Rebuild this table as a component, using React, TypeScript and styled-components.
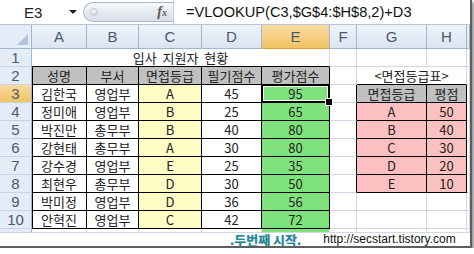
import React from "react";
import styled, { createGlobalStyle, css } from "styled-components";

const GRID = "#d0d7e5";
const HEAD_LINE = "#9eb6ce";
const KR = `"Noto Sans CJK KR", "Noto Sans", sans-serif`;
const LATIN = `"Liberation Sans", Arial, sans-serif`;

const GRAY = "#c0c0c0";
const YELLOW = "#fdfcc4";
const GREEN = "#80e27c";
const PINK = "#fbc1c1";

const GlobalStyle = createGlobalStyle`
  * { box-sizing: border-box; }
  body { margin: 0; background: #fff; }
`;

const Window = styled.div`
  width: 472px;
  height: 248px;
  display: flex;
  flex-direction: column;
  background: #fff;
  border-right: 2px solid #5e5e5e;
  border-bottom: 2px solid #5e5e5e;
  box-shadow: 2px 2px 3px rgba(0, 0, 0, 0.45);
  overflow: hidden;
`;

const FormulaBar = styled.div`
  height: 25px;
  display: flex;
  align-items: center;
  border-bottom: 1px solid #b6c5d8;
  background: #fff;
`;

const NameBox = styled.div`
  width: 83px;
  height: 100%;
  display: flex;
  align-items: center;
  padding-left: 24px;
  font-family: ${LATIN};
  font-size: 15px;
  color: #222;
`;

const DropArrow = styled.span`
  margin-left: auto;
  margin-right: 6px;
  border-left: 4px solid transparent;
  border-right: 4px solid transparent;
  border-top: 4px solid #222;
`;

const Grip = styled.div`
  width: 90px;
  height: 20px;
  display: flex;
  align-items: center;
  padding-left: 6px;
  border: 1px solid #a9b8c9;
  border-right: none;
  border-radius: 10px 0 0 10px;
  background: linear-gradient(#f6f8fb, #d6dee8);
`;

const GripDot = styled.span`
  width: 8px;
  height: 8px;
  border-radius: 50%;
  background: radial-gradient(circle at 40% 35%, #ffffff, #b9c5d3);
  border: 1px solid #c3ccd8;
`;

const FxLabel = styled.span`
  margin-left: auto;
  margin-right: 6px;
  font-family: "Liberation Serif", serif;
  font-style: italic;
  font-weight: bold;
  font-size: 14px;
  color: #5a5a5a;

  small {
    font-size: 10px;
  }
`;

const FormulaInput = styled.div`
  flex: 1;
  height: 100%;
  display: flex;
  align-items: center;
  padding-left: 12px;
  border-left: 1px solid #c5d0dc;
  font-family: ${LATIN};
  font-size: 14.6px;
  color: #111;
  white-space: nowrap;
`;

const Sheet = styled.div`
  display: grid;
  grid-template-columns: 32px 55px 52px 63px 60px 68px 27px 70px 40px 3px;
  grid-template-rows: 24px repeat(10, 18px) 4px;
  font-family: ${KR};
  font-size: 13px;
  overflow: hidden;
`;

const Corner = styled.div`
  position: relative;
  background: #e4ecf7;
  border-right: 1px solid ${HEAD_LINE};
  border-bottom: 1px solid ${HEAD_LINE};

  &::after {
    content: "";
    position: absolute;
    right: 3px;
    bottom: 3px;
    border-left: 11px solid transparent;
    border-bottom: 11px solid #b4c4d9;
  }
`;

const ColHead = styled.div<{ $active?: boolean }>`
  display: flex;
  align-items: center;
  justify-content: center;
  background: ${({ $active }) =>
    $active
      ? "linear-gradient(#f9dca2, #f2c262)"
      : "linear-gradient(#eef3fa, #dbe4f0)"};
  border-right: 1px solid ${HEAD_LINE};
  border-bottom: 1px solid ${({ $active }) => ($active ? "#e0a040" : HEAD_LINE)};
  font-family: ${LATIN};
  font-size: 15px;
  color: #4a5a70;
`;

const RowHead = styled.div<{ $active?: boolean; $cut?: boolean }>`
  display: flex;
  align-items: ${({ $cut }) => ($cut ? "flex-start" : "center")};
  justify-content: center;
  overflow: hidden;
  background: ${({ $active }) =>
    $active ? "linear-gradient(#f9dca2, #f2c262)" : "#e4ecf7"};
  border-right: 1px solid ${HEAD_LINE};
  border-bottom: 1px solid #c5d3e5;
  font-family: ${LATIN};
  font-size: 15px;
  line-height: 16px;
  color: #4a5a70;
`;

interface CellProps {
  $fill?: string;
  $right?: string;
  $bottom?: string;
  $left?: boolean;
  $span?: number;
  $selected?: boolean;
}

const Cell = styled.div<CellProps>`
  grid-column: span ${({ $span }) => $span ?? 1};
  position: relative;
  display: flex;
  align-items: center;
  justify-content: center;
  background: ${({ $fill }) => $fill ?? "#fff"};
  border-right: 1px solid ${({ $right }) => $right ?? GRID};
  border-bottom: 1px solid ${({ $bottom }) => $bottom ?? GRID};
  box-shadow: ${({ $left }) => ($left ? "inset 1px 0 0 #000" : "none")};
  color: #222;
  line-height: 17px;
  white-space: nowrap;

  ${({ $selected }) =>
    $selected &&
    css`
      &::before {
        content: "";
        position: absolute;
        left: -1px;
        top: -1px;
        right: -1px;
        bottom: -1px;
        border: 2px solid #000;
        box-shadow: inset 0 0 0 1px #fff;
        z-index: 2;
      }
      &::after {
        content: "";
        position: absolute;
        right: -4px;
        bottom: -4px;
        width: 6px;
        height: 6px;
        background: #000;
        border: 1px solid #fff;
        z-index: 3;
      }
    `}
`;

const Footer = styled.div`
  height: 13px;
  display: flex;
  align-items: center;
  padding-left: 230px;
  gap: 22px;
  white-space: nowrap;
`;

const Watermark = styled.span`
  font-family: ${KR};
  font-weight: bold;
  font-size: 13px;
  line-height: 13px;
  color: #1e8b9b;
  text-shadow: 0 0 1px rgba(0, 40, 60, 0.4);
`;

const Url = styled.span`
  font-family: ${LATIN};
  font-size: 12px;
  line-height: 13px;
  color: #111;
`;

const COLUMNS = ["A", "B", "C", "D", "E", "F", "G", "H"];

const applicants: [string, string, string, number, number][] = [
  ["김한국", "영업부", "A", 45, 95],
  ["정미애", "영업부", "B", 25, 65],
  ["박진만", "총무부", "B", 40, 80],
  ["강현태", "총무부", "A", 30, 80],
  ["강수경", "영업부", "E", 25, 35],
  ["최현우", "총무부", "D", 30, 50],
  ["박미정", "영업부", "D", 36, 56],
  ["안혁진", "영업부", "C", 42, 72],
];

const grades: [string, number][] = [
  ["A", 50],
  ["B", 40],
  ["C", 30],
  ["D", 20],
  ["E", 10],
];

const B = "#000";

const lookupCells = (row: number) => {
  if (row === 3) {
    return [
      <Cell key="g" $fill={GRAY} $right={B} $bottom={B}>면접등급</Cell>,
      <Cell key="h" $fill={GRAY} $right={B} $bottom={B}>평점</Cell>,
    ];
  }
  const grade = grades[row - 4];
  if (grade) {
    return [
      <Cell key="g" $fill={PINK} $right={B} $bottom={B}>{grade[0]}</Cell>,
      <Cell key="h" $fill={PINK} $right={B} $bottom={B}>{grade[1]}</Cell>,
    ];
  }
  return [<Cell key="g" />, <Cell key="h" />];
};

const App = () => {
  return (
    <>
      <GlobalStyle />
      <Window>
        <FormulaBar>
          <NameBox>
            E3
            <DropArrow />
          </NameBox>
          <Grip>
            <GripDot />
            <FxLabel>
              f<small>x</small>
            </FxLabel>
          </Grip>
          <FormulaInput>=VLOOKUP(C3,$G$4:$H$8,2)+D3</FormulaInput>
        </FormulaBar>

        <Sheet>
          <Corner />
          {COLUMNS.map((c) => (
            <ColHead key={c} $active={c === "E"}>
              {c}
            </ColHead>
          ))}
          <ColHead />

          <RowHead>1</RowHead>
          <Cell $span={5} $bottom={B}>입사&nbsp; 지원자&nbsp; 현황</Cell>
          <Cell />
          <Cell />
          <Cell />
          <Cell />

          <RowHead>2</RowHead>
          {["성명", "부서", "면접등급", "필기점수", "평가점수"].map((t, i) => (
            <Cell key={t} $fill={GRAY} $right={B} $bottom={B} $left={i === 0}>
              {t}
            </Cell>
          ))}
          <Cell />
          <Cell $span={2} $bottom={B}>&lt;면접등급표&gt;</Cell>
          <Cell />

          {applicants.map(([name, dept, grade, written, total], i) => {
            const row = i + 3;
            return (
              <React.Fragment key={name}>
                <RowHead $active={row === 3}>{row}</RowHead>
                <Cell $right={B} $bottom={B} $left>{name}</Cell>
                <Cell $right={B} $bottom={B}>{dept}</Cell>
                <Cell $fill={YELLOW} $right={B} $bottom={B}>{grade}</Cell>
                <Cell $right={B} $bottom={B}>{written}</Cell>
                <Cell $fill={GREEN} $right={B} $bottom={B} $selected={row === 3}>
                  {total}
                </Cell>
                <Cell $right={row <= 8 ? B : undefined} />
                {lookupCells(row)}
                <Cell />
              </React.Fragment>
            );
          })}

          <RowHead $cut>11</RowHead>
          <Cell />
          <Cell />
          <Cell />
          <Cell />
          <Cell $fill={GREEN} />
          <Cell />
          <Cell />
          <Cell />
          <Cell />
        </Sheet>

        <Footer>
          <Watermark>.두번째 시작.</Watermark>
          <Url>http://secstart.tistory.com</Url>
        </Footer>
      </Window>
    </>
  );
};

export default App;
